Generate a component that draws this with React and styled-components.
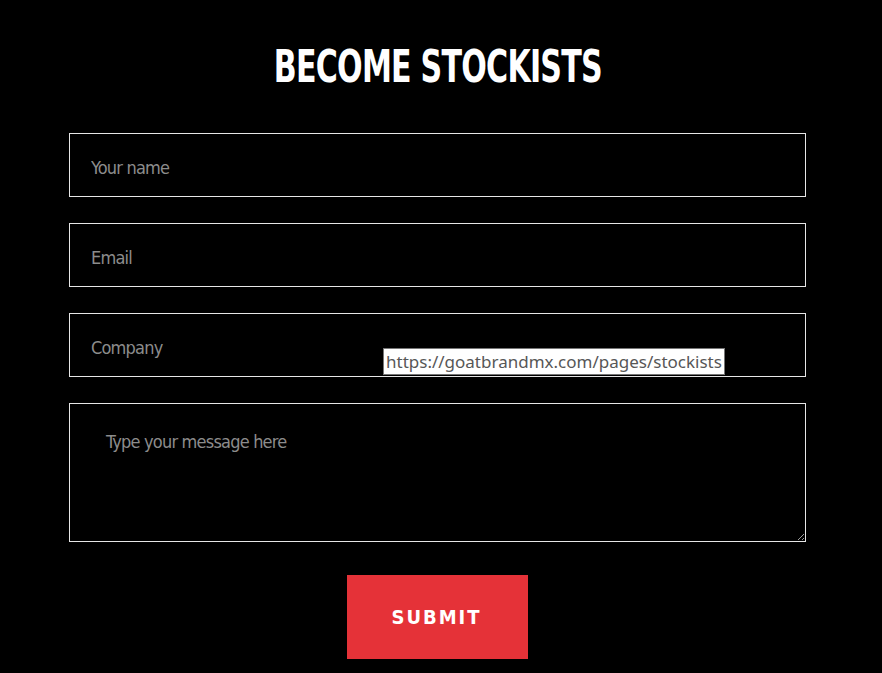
import React from 'react'
import styled, {createGlobalStyle} from 'styled-components'

const GlobalStyle = createGlobalStyle`
  html, body {
    margin: 0;
    padding: 0;
    background: #000;
  }
  body {
    font-family: "DejaVu Sans Condensed", "DejaVu Sans", sans-serif;
    font-stretch: condensed;
  }
`

const Page = styled.div`
  position: relative;
  width: 882px;
  height: 673px;
  background: #000;
  overflow: hidden;
`

const Title = styled.h1`
  margin: 0;
  padding-top: 44px;
  width: 737px;
  margin-left: 69px;
  text-align: center;
  color: #fff;
  font-family: "DejaVu Sans Condensed", "DejaVu Sans", sans-serif;
  font-stretch: condensed;
  font-weight: 700;
  font-size: 44px;
  line-height: 46px;
  letter-spacing: -1px;
  span {
    display: inline-block;
    transform: scaleX(0.76);
  }
`

const Form = styled.form`
  margin: 43px 0 0 69px;
  width: 737px;
  display: flex;
  flex-direction: column;
  align-items: center;
  gap: 26px;
`

const field = `
  box-sizing: border-box;
  width: 100%;
  background: #000;
  border: 1.5px solid #e6e6e6;
  border-radius: 0;
  color: #fff;
  font-family: "DejaVu Sans Condensed", "DejaVu Sans", sans-serif;
  font-stretch: condensed;
  font-size: 18px;
  letter-spacing: -0.8px;
  outline: none;
  &::placeholder {
    color: #8c8c8c;
  }
`

const Input = styled.input`
  ${field}
  height: 64px;
  padding: 4px 21px 0;
`

const Message = styled.textarea`
  ${field}
  height: 139px;
  padding: 27px 36px;
  resize: vertical;
`

const Submit = styled.button`
  margin-top: 7px;
  width: 181px;
  height: 84px;
  border: none;
  background: #e53238;
  color: #fff;
  font-family: "DejaVu Sans Condensed", "DejaVu Sans", sans-serif;
  font-stretch: condensed;
  font-weight: 700;
  font-size: 20px;
  letter-spacing: 2px;
  padding-left: 4px;
  cursor: pointer;
`

const Tooltip = styled.div`
  position: absolute;
  left: 383px;
  top: 348px;
  height: 27px;
  box-sizing: border-box;
  padding: 0 2px;
  background: #fff;
  border: 1px solid #767676;
  color: #575757;
  font-family: "Noto Sans", "Open Sans", sans-serif;
  font-size: 17px;
  line-height: 25px;
  white-space: nowrap;
`

export default function App() {
  return (
    <Page>
      <GlobalStyle/>
      <Title><span>BECOME STOCKISTS</span></Title>
      <Form onSubmit={e => e.preventDefault()}>
        <Input placeholder="Your name"/>
        <Input placeholder="Email"/>
        <Input placeholder="Company"/>
        <Message placeholder="Type your message here"/>
        <Submit type="submit">SUBMIT</Submit>
      </Form>
      <Tooltip>https://goatbrandmx.com/pages/stockists</Tooltip>
    </Page>
  )
}
